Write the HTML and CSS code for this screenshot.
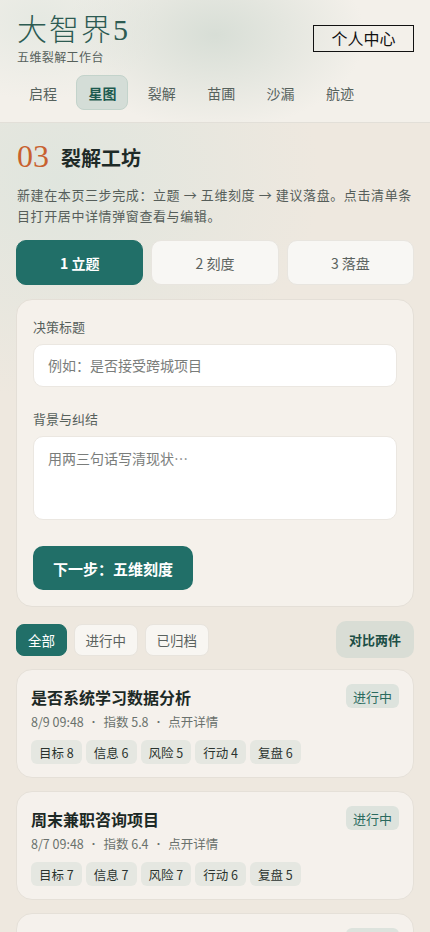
FILE: index.html
```html
<!DOCTYPE html>
<html lang="zh">
<head>
<meta charset="utf-8">
<title>大智界5</title>
<link rel="stylesheet" href="styles.css">
</head>
<body>
<header class="header">
  <div class="head-top">
    <div class="brand">
      <h1 class="brand-title">大智界5</h1>
      <div class="brand-sub">五维裂解工作台</div>
    </div>
    <button class="profile-btn">个人中心</button>
  </div>
  <nav class="nav">
    <a class="nav-item">启程</a>
    <a class="nav-item active">星图</a>
    <a class="nav-item">裂解</a>
    <a class="nav-item">苗圃</a>
    <a class="nav-item">沙漏</a>
    <a class="nav-item">航迹</a>
  </nav>
</header>

<main class="main">
  <div class="sec-head">
    <span class="sec-num">03</span>
    <h2 class="sec-title">裂解工坊</h2>
  </div>
  <p class="sec-desc">新建在本页三步完成：立题 → 五维刻度 → 建议落盘。点击清单条目打开居中详情弹窗查看与编辑。</p>

  <div class="steps">
    <div class="step active">1 立题</div>
    <div class="step">2 刻度</div>
    <div class="step">3 落盘</div>
  </div>

  <section class="form-card">
    <label class="field-label">决策标题</label>
    <div class="input">例如：是否接受跨城项目</div>
    <label class="field-label second">背景与纠结</label>
    <div class="textarea">用两三句话写清现状…</div>
    <button class="next-btn">下一步：五维刻度</button>
  </section>

  <div class="filters">
    <div class="filter-group">
      <span class="pill active">全部</span>
      <span class="pill">进行中</span>
      <span class="pill">已归档</span>
    </div>
    <button class="compare-btn">对比两件</button>
  </div>

  <div class="list">
    <article class="item">
      <div class="item-top">
        <h3 class="item-title">是否系统学习数据分析</h3>
        <span class="badge">进行中</span>
      </div>
      <div class="item-meta">8/9 09:48 <span class="dot">•</span> 指数 5.8 <span class="dot">•</span> 点开详情</div>
      <div class="chips">
        <span class="chip">目标 8</span><span class="chip">信息 6</span><span class="chip">风险 5</span><span class="chip">行动 4</span><span class="chip">复盘 6</span>
      </div>
    </article>
    <article class="item">
      <div class="item-top">
        <h3 class="item-title">周末兼职咨询项目</h3>
        <span class="badge">进行中</span>
      </div>
      <div class="item-meta">8/7 09:48 <span class="dot">•</span> 指数 6.4 <span class="dot">•</span> 点开详情</div>
      <div class="chips">
        <span class="chip">目标 7</span><span class="chip">信息 7</span><span class="chip">风险 7</span><span class="chip">行动 6</span><span class="chip">复盘 5</span>
      </div>
    </article>
    <article class="item">
      <div class="item-top">
        <h3 class="item-title">是否更换城市工作机会</h3>
        <span class="badge">进行中</span>
      </div>
      <div class="item-meta">8/5 09:48 <span class="dot">•</span> 指数 6.0 <span class="dot">•</span> 点开详情</div>
    </article>
  </div>
</main>
</body>
</html>
```

FILE: styles.css
```css
* { box-sizing: border-box; }
html, body { margin: 0; padding: 0; }
body {
  width: 430px;
  height: 932px;
  font-family: "Noto Sans CJK SC", "Noto Sans", sans-serif;
  color: #1e2a27;
  background:
    radial-gradient(ellipse 260px 220px at 60px 180px, rgba(222,229,222,0.9), rgba(222,229,222,0) 100%),
    #eee8df;
  overflow: hidden;
}
.header {
  height: 123px;
  padding: 13px 16px 0 17px;
  border-bottom: 1px solid #e2dfd8;
  background:
    radial-gradient(ellipse 150px 95px at 215px 35px, rgba(214,221,213,0.95), rgba(214,221,213,0) 100%),
    radial-gradient(ellipse 120px 80px at 40px 20px, rgba(226,231,224,0.8), rgba(226,231,224,0) 100%),
    #f3f0ea;
}
.head-top {
  display: flex;
  justify-content: space-between;
  align-items: flex-start;
}
.brand-title {
  margin: 0;
  font-family: "Liberation Serif", "Noto Sans CJK SC", serif;
  font-weight: 300;
  font-size: 30px;
  line-height: 34px;
  letter-spacing: 2px;
  color: #2d5b52;
}
.brand-sub {
  margin-top: 2px;
  font-size: 12px;
  line-height: 16px;
  letter-spacing: 0.4px;
  color: #56605b;
}
.profile-btn {
  margin-top: 12px;
  width: 101px;
  height: 27px;
  padding: 0;
  border: 1px solid #111;
  background: transparent;
  font-family: "Noto Sans CJK SC", sans-serif;
  font-size: 16px;
  line-height: 25px;
  color: #111;
}
.nav {
  display: flex;
  gap: 7.4px;
  margin-top: 10px;
}
.nav-item {
  width: 52px;
  height: 35px;
  display: flex;
  align-items: center;
  justify-content: center;
  font-size: 14px;
  color: #56625d;
  border: 1px solid transparent;
  border-radius: 8px;
}
.nav-item.active {
  background: #d4ddd7;
  border-color: #c3d3cb;
  color: #1d5a4f;
  font-weight: 700;
}
.main { padding: 16px 16px 0 16px; }
.sec-head {
  display: flex;
  align-items: center;
  gap: 12px;
  height: 34px;
  margin-left: 1px;
}
.sec-num {
  font-family: "Liberation Serif", serif;
  font-weight: 400;
  font-size: 32px;
  line-height: 34px;
  color: #c8612f;
}
.sec-title {
  margin: 2px 0 0 0;
  font-size: 20px;
  font-weight: 700;
  color: #1e2a27;
}
.sec-desc {
  margin: 11px 0 0 1px;
  font-size: 13px;
  line-height: 21px;
  letter-spacing: 0.6px;
  color: #565e5a;
}
.steps {
  display: grid;
  grid-template-columns: 1fr 1fr 1fr;
  gap: 8px;
  margin-top: 14px;
}
.step {
  height: 45px;
  display: flex;
  align-items: center;
  justify-content: center;
  font-size: 14px;
  color: #5a625e;
  background: #f8f7f4;
  border: 1px solid #e8e5df;
  border-radius: 10px;
}
.step.active {
  background: #216f68;
  border-color: #216f68;
  color: #fff;
  font-weight: 700;
}
.form-card {
  margin-top: 14px;
  padding: 17px 16px 16px 16px;
  background: #f5f1eb;
  border: 1px solid #e4dfd7;
  border-radius: 16px;
}
.field-label {
  display: block;
  font-size: 13px;
  line-height: 20px;
  color: #56605b;
  margin-bottom: 7px;
}
.field-label.second { margin-top: 22px; }
.input, .textarea {
  background: #fff;
  border: 1px solid #ebe7e1;
  border-radius: 10px;
  padding: 0 14px;
  font-size: 14px;
  color: #7a7d7b;
}
.input {
  height: 43px;
  line-height: 41px;
}
.textarea {
  height: 84px;
  padding-top: 10px;
  line-height: 22px;
}
.next-btn {
  display: block;
  margin-top: 26px;
  width: 160px;
  height: 44px;
  border: 0;
  border-radius: 10px;
  background: #216f68;
  color: #fff;
  font-family: "Noto Sans CJK SC", sans-serif;
  font-size: 15px;
  font-weight: 700;
  padding: 0;
}
.filters {
  display: flex;
  justify-content: space-between;
  align-items: center;
  margin-top: 14px;
}
.filter-group { display: flex; gap: 6.5px; }
.pill {
  height: 32px;
  padding: 0 11px;
  display: flex;
  align-items: center;
  font-size: 13.5px;
  color: #5a625e;
  background: #f8f6f2;
  border: 1px solid #e8e4dd;
  border-radius: 8px;
}
.pill.active {
  background: #216f68;
  border-color: #216f68;
  color: #fff;
}
.compare-btn {
  width: 78px;
  height: 37px;
  border: 0;
  border-radius: 10px;
  background: #d9ddd5;
  color: #1d4f46;
  font-family: "Noto Sans CJK SC", sans-serif;
  font-size: 13px;
  font-weight: 700;
  padding: 0;
}
.list {
  display: flex;
  flex-direction: column;
  gap: 13px;
  margin-top: 11px;
}
.item {
  background: #f5f1ec;
  border: 1px solid #e5e0d8;
  border-radius: 16px;
  padding: 14px 14px 13px 14px;
}
.item-top {
  display: flex;
  justify-content: space-between;
  align-items: flex-start;
}
.item-title {
  margin: 2px 0 0 0;
  font-size: 16px;
  line-height: 22px;
  font-weight: 700;
  color: #1c2925;
}
.badge {
  height: 24px;
  padding: 0 7px;
  display: flex;
  align-items: center;
  font-size: 13px;
  color: #2a6a5e;
  background: #dde3dd;
  border-radius: 6px;
}
.item-meta {
  margin-top: 5px;
  height: 18px;
  font-size: 12.5px;
  line-height: 18px;
  color: #6a716d;
  overflow: visible;
}
.dot { margin: 0 2px; font-size: 10px; line-height: 1; vertical-align: 1px; }
.chips {
  display: flex;
  gap: 4px;
  margin-top: 9px;
}
.chip {
  height: 24px;
  padding: 0 8px;
  display: flex;
  align-items: center;
  font-size: 12.5px;
  color: #2a332f;
  background: #e5e7e1;
  border-radius: 6px;
}
```
